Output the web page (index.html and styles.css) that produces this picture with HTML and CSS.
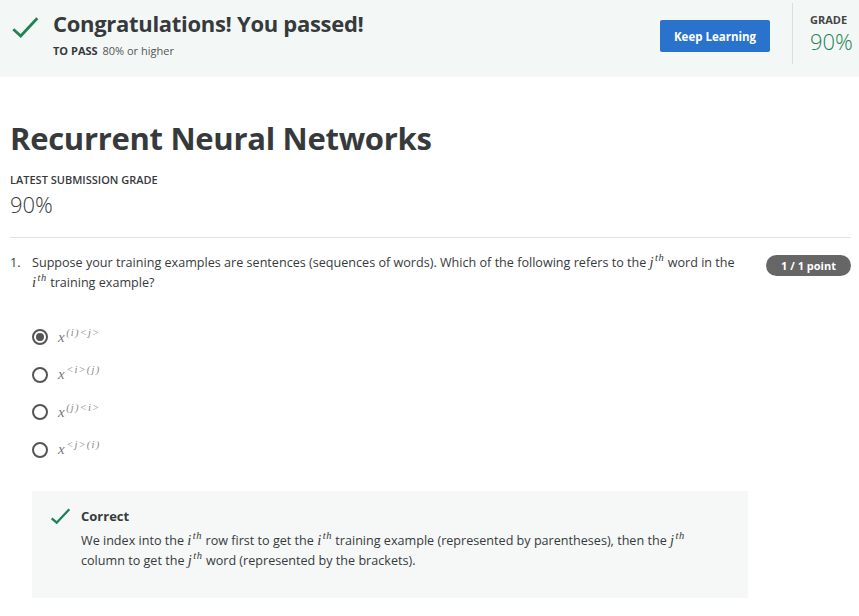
FILE: index.html
```html
<!DOCTYPE html>
<html lang="en">
<head>
<meta charset="utf-8">
<title>Recurrent Neural Networks</title>
<link rel="stylesheet" href="styles.css">
</head>
<body>
<header class="banner">
  <svg class="banner-check" width="28" height="22" viewBox="0 0 28 22"><path d="M2.3 13.3 L9.7 20 L26.3 2.3" fill="none" stroke="#1f8354" stroke-width="2.8"/></svg>
  <div class="banner-text">
    <div class="banner-title">Congratulations! You passed!</div>
    <div class="pass"><span class="pass-label">TO PASS</span> 80% or higher</div>
  </div>
  <button class="btn">Keep Learning</button>
  <div class="vdivider"></div>
  <div class="grade">
    <div class="grade-label">GRADE</div>
    <div class="grade-value">90%</div>
  </div>
</header>

<main class="main">
  <h1 class="title">Recurrent Neural Networks</h1>
  <div class="sub-label">LATEST SUBMISSION GRADE</div>
  <div class="sub-value">90%</div>
  <hr class="rule">

  <section class="question">
    <div class="q-row">
      <div class="q-num">1.</div>
      <div class="q-text">Suppose your training examples are sentences (sequences of words). Which of the following refers to the <span class="m">j<sup>th</sup></span> word in the <span class="m">i<sup>th</sup></span> training example?</div>
      <div class="pill">1 / 1 point</div>
    </div>

    <ul class="options">
      <li class="option"><span class="radio checked"></span><span class="opt m">x<sup>(i)&lt;j&gt;</sup></span></li>
      <li class="option"><span class="radio"></span><span class="opt m">x<sup>&lt;i&gt;(j)</sup></span></li>
      <li class="option"><span class="radio"></span><span class="opt m">x<sup>(j)&lt;i&gt;</sup></span></li>
      <li class="option"><span class="radio"></span><span class="opt m">x<sup>&lt;j&gt;(i)</sup></span></li>
    </ul>

    <div class="feedback">
      <svg class="fb-check" width="22" height="18" viewBox="0 0 22 18"><path d="M1.7 11.3 L6.7 15.7 L19.3 2.3" fill="none" stroke="#1f8354" stroke-width="2.4"/></svg>
      <div class="fb-body">
        <div class="fb-title">Correct</div>
        <div class="fb-text">We index into the <span class="m">i<sup>th</sup></span> row first to get the <span class="m">i<sup>th</sup></span> training example (represented by parentheses), then the <span class="m">j<sup>th</sup></span> column to get the <span class="m">j<sup>th</sup></span> word (represented by the brackets).</div>
      </div>
    </div>
  </section>
</main>
</body>
</html>
```

FILE: styles.css
```css
* { box-sizing: border-box; }

body {
  margin: 0;
  font-family: "Open Sans", "Noto Sans", sans-serif;
  color: #373a3c;
  background: #fff;
}

.banner {
  height: 77px;
  background: #f3f8f6;
  display: flex;
  align-items: flex-start;
}

.banner-check {
  margin: 16px 0 0 11px;
  flex: none;
}

.banner-text {
  margin-left: 14px;
  padding-top: 8px;
}

.banner-title {
  font-size: 22px;
  letter-spacing: -0.3px;
  font-weight: 700;
  line-height: 30px;
  color: #373a3c;
}

.pass {
  margin-top: 5px;
  font-size: 11px;
  line-height: 15px;
  color: #555;
}

.pass-label {
  font-weight: 700;
  color: #373a3c;
  margin-right: 2px;
}

.btn {
  margin: 20px 0 0 auto;
  width: 110px;
  height: 32px;
  background: #2a73cc;
  color: #fff;
  border: none;
  border-radius: 2px;
  font-family: "Open Sans", sans-serif;
  font-size: 11.5px;
  font-weight: 700;
  padding: 0;
}

.vdivider {
  width: 1px;
  height: 61px;
  margin: 3px 0 0 22px;
  background: #dcdfe0;
}

.grade {
  width: 66px;
  padding: 12px 0 0 17px;
}

.grade-label {
  font-size: 11px;
  line-height: 15px;
  font-weight: 700;
  color: #444;
}

.grade-value {
  font-size: 22px;
  line-height: 28px;
  font-weight: 300;
  color: #1f8354;
}

.main {
  padding: 0 8px 0 10px;
}

.title {
  margin: 41px 0 0;
  font-size: 31px;
  letter-spacing: -0.3px;
  line-height: 40px;
  font-weight: 700;
  color: #373a3c;
}

.sub-label {
  margin-top: 15px;
  font-size: 11px;
  line-height: 14px;
  font-weight: 600;
  color: #373a3c;
}

.sub-value {
  margin-top: 3px;
  font-size: 22px;
  line-height: 28px;
  font-weight: 300;
  color: #373a3c;
}

.rule {
  margin: 19px 0 0;
  border: none;
  border-top: 1px solid #e1e1e1;
  height: 0;
}

.question {
  margin-top: 15px;
}

.q-row {
  display: flex;
  align-items: flex-start;
  font-size: 12.6px;
  line-height: 19.5px;
  color: #373a3c;
}

.q-num {
  width: 22px;
  flex: none;
}

.q-text {
  width: 708px;
  flex: none;
}

.pill {
  margin: 2px 0 0 auto;
  width: 85px;
  height: 21px;
  border-radius: 11px;
  background: #666;
  color: #fff;
  font-size: 11px;
  font-weight: 700;
  line-height: 21px;
  text-align: center;
}

.m {
  font-family: "Liberation Serif", "Times New Roman", serif;
  font-style: italic;
  font-size: 14.5px;
}

.m sup {
  font-size: 10.5px;
  letter-spacing: 0.6px;
  vertical-align: 0;
  position: relative;
  top: -6px;
  line-height: 0;
  margin-left: 1.5px;
}

.options {
  list-style: none;
  margin: 26.5px 0 0;
  padding: 0 0 0 22px;
}

.option {
  height: 37.5px;
  display: flex;
  align-items: center;
}

.radio {
  width: 16px;
  height: 16px;
  border: 2px solid #555;
  border-radius: 50%;
  display: flex;
  align-items: center;
  justify-content: center;
  flex: none;
}

.radio.checked::after {
  content: "";
  width: 8px;
  height: 8px;
  border-radius: 50%;
  background: #555;
}

.opt {
  margin-left: 10px;
  color: #777;
  font-size: 15px;
}

.opt sup {
  font-size: 10.5px;
  letter-spacing: 1.2px;
  color: #888;
}

.feedback {
  margin: 22px 0 0 22px;
  width: 716px;
  height: 107px;
  background: #f5f8f7;
  display: flex;
  align-items: flex-start;
  padding: 16px 47px 0 18px;
}

.fb-check {
  flex: none;
}

.fb-body {
  margin-left: 9px;
  font-size: 12.6px;
  line-height: 19.5px;
  color: #373a3c;
}

.fb-title {
  font-weight: 700;
  font-size: 13px;
}

.fb-text {
  margin-top: 5px;
}
```
